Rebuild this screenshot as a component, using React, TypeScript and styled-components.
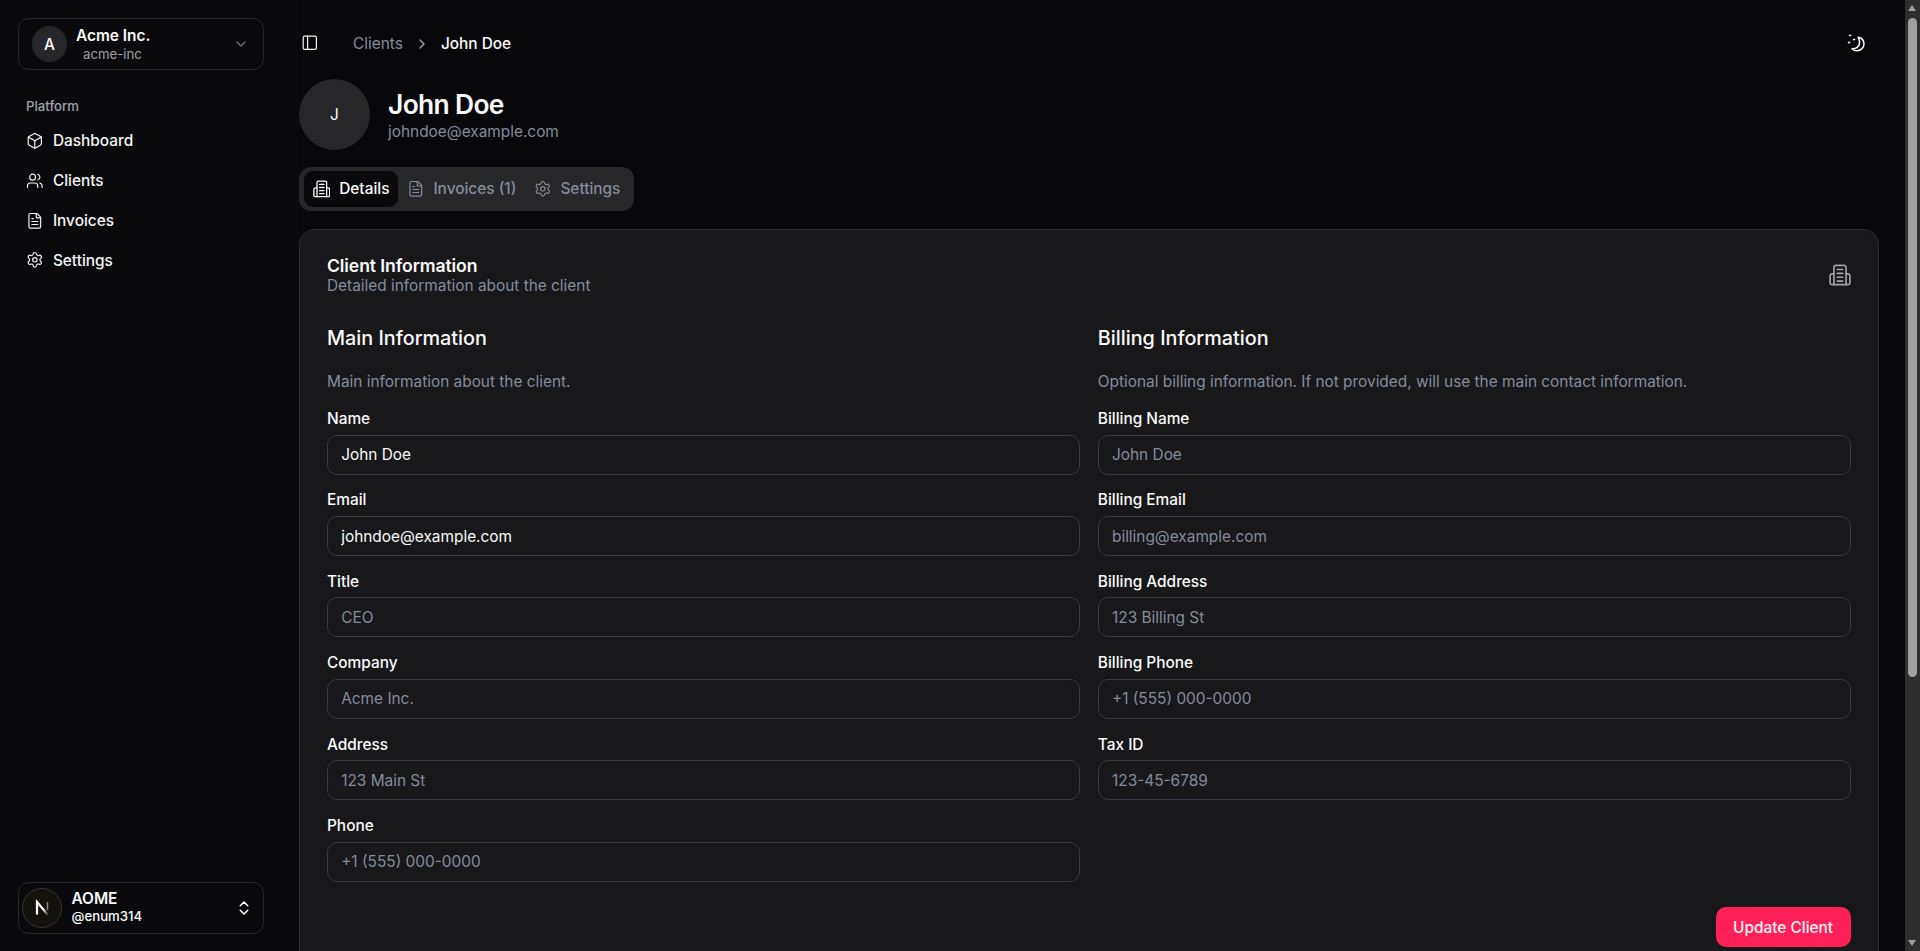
import React from "react";
import styled, { createGlobalStyle } from "styled-components";
import { Box, Users, FileText, Settings, PanelLeft, ChevronDown, ChevronRight, ChevronsUpDown } from "lucide-react";

const GlobalStyle = createGlobalStyle`
  html { color-scheme: dark; background: #09090b; }
  body { margin: 0; background: #09090b; color: #fafafa; font-family: Inter, "Liberation Sans", sans-serif; font-size: 15.4px; }
  * { box-sizing: border-box; }
`;

const Shell = styled.div`
  display: flex;
  min-height: 1324px;
  background: #08080a;
`;
const Sidebar = styled.aside`
  position: sticky;
  top: 0;
  flex: 0 0 299px;
  height: 951px;
  display: flex;
  flex-direction: column;
  padding: 18px 35px 17.5px 18px;
  background: #0a0a0c;
`;
const BorderedBox = styled.div`
  display: flex;
  align-items: center;
  border: 1px solid #27272a;
  border-radius: 11px;
  color: #fafafa;
`;
const TeamBox = styled(BorderedBox)`
  height: 52px;
  padding: 0 14px 0 13px;
  gap: 9px;
`;
const TeamAvatar = styled.div`
  width: 35px;
  height: 36px;
  border-radius: 50%;
  background: #27272a;
  display: flex;
  align-items: center;
  justify-content: center;
  font-size: 15.4px;
  font-weight: 500;
  flex: none;
`;
const TeamText = styled.div`
  display: flex;
  flex-direction: column;
  flex: 1;
  align-items: flex-start;
`;
const TeamName = styled.div`
  font-size: 15.4px;
  line-height: 19px;
  font-weight: 600;
`;
const TeamSlug = styled.div`
  font-size: 13.2px;
  line-height: 18px;
  margin-left: 7px;
  color: #a1a1aa;
`;
const GroupLabel = styled.div`
  margin: 26px 0 5px 8px;
  font-size: 13.2px;
  line-height: 20px;
  font-weight: 500;
  color: #a1a1aa;
`;
const NavList = styled.nav`
  display: flex;
  flex-direction: column;
`;
const NavItem = styled.a`
  display: flex;
  align-items: center;
  gap: 9.5px;
  height: 39.8px;
  padding-left: 7.8px;
  font-size: 15.4px;
  font-weight: 500;
  color: #f4f4f5;
`;
const UserBox = styled(BorderedBox)`
  height: 52px;
  margin-top: auto;
  padding: 0 10px 0 3px;
  gap: 9.5px;
`;
const UserText = styled.div`
  flex: 1;
  display: flex;
  flex-direction: column;
`;
const UserName = styled.div`
  font-size: 15.4px;
  line-height: 17px;
  font-weight: 600;
`;
const UserHandle = styled.div`
  font-size: 13.2px;
  line-height: 18px;
  font-weight: 500;
`;
const Main = styled.main`
  flex: 1;
  min-width: 0;
  padding: 0 41.4px 0 0;
`;
const TopBar = styled.header`
  height: 78px;
  padding: 8px 14px 0 2px;
  display: flex;
  align-items: center;
`;
const Crumbs = styled.div`
  display: flex;
  align-items: center;
  margin-left: 34.5px;
  flex: 1;
  font-size: 15.4px;
  padding-top: 1px;
`;
const CrumbLink = styled.span`
  color: #858c9b;
`;
const CrumbSep = styled.span`
  display: flex;
  width: 38px;
  justify-content: center;
  color: #a1a1aa;
`;
const CrumbCurrent = styled.span`
  font-weight: 500;
  color: #fafafa;
`;
const Profile = styled.section`
  display: flex;
  align-items: center;
  gap: 18px;
  height: 72px;
`;
const ProfileAvatar = styled.div`
  width: 71px;
  height: 71px;
  border-radius: 50%;
  background: #27272a;
  display: flex;
  align-items: center;
  justify-content: center;
  font-size: 15.4px;
`;
const ProfileName = styled.h1`
  margin: 0;
  padding-top: 1px;
  font-size: 26.4px;
  line-height: 35px;
  font-weight: 600;
  letter-spacing: -0.66px;
`;
const ProfileEmail = styled.div`
  font-size: 15.4px;
  line-height: 20px;
  color: #858c9b;
`;
const TabBar = styled.div`
  display: flex;
  margin-top: 17px;
  padding: 4.4px 5px;
  height: 44px;
  width: 335px;
  border-radius: 12px;
  background: #27272a;
`;
const Tab = styled.div<{ $active?: boolean }>`
  display: flex;
  align-items: center;
  flex: none;
  gap: 8.8px;
  height: 35.2px;
  padding: 0 8.8px;
  border-radius: 9px;
  font-size: 15.4px;
  font-weight: 500;
  white-space: nowrap;
  background: ${(p) => (p.$active ? "#09090b" : "transparent")};
  color: ${(p) => (p.$active ? "#fafafa" : "#858c9b")};
`;
const Card = styled.section`
  margin-top: 18px;
  border: 1px solid #2e2e33;
  border-radius: 15.4px;
  background: #18181b;
  padding: 25px 27px 28px;
`;
const CardHead = styled.div`
  display: flex;
  justify-content: space-between;
  align-items: center;
  height: 40px;
  margin-bottom: 29px;
`;
const CardTitle = styled.div`
  font-size: 17.6px;
  line-height: 20px;
  font-weight: 600;
  letter-spacing: -0.1px;
`;
const CardSubtitle = styled.div`
  font-size: 15.4px;
  line-height: 19px;
  color: #858c9b;
`;
const CardIcon = styled.span`
  display: flex;
  color: #a1a1aa;
`;
const Columns = styled.div`
  display: grid;
  grid-template-columns: 1fr 1fr;
  column-gap: 18px;
`;
const Column = styled.div`
  display: flex;
  flex-direction: column;
`;
const SectionTitle = styled.h2`
  margin: 0;
  font-size: 19.8px;
  line-height: 28px;
  font-weight: 500;
`;
const SectionText = styled.p`
  margin: 18px 0 14px;
  font-size: 15.4px;
  line-height: 24px;
  color: #858c9b;
`;
const Field = styled.label`
  display: flex;
  flex-direction: column;
  margin-bottom: 14.7px;
`;
const FieldLabel = styled.span`
  font-size: 15.4px;
  line-height: 22px;
  font-weight: 500;
  margin-bottom: 4.7px;
`;
const Input = styled.input`
  height: 40px;
  width: 100%;
  padding: 0 13.2px;
  border: 1px solid #3a3a40;
  border-radius: 10px;
  background: #18181b;
  color: #fafafa;
  font: 400 15.4px Inter, "Liberation Sans", sans-serif;
  outline: none;
  &::placeholder { color: #858c9b; opacity: 1; }
`;
const Actions = styled.div`
  display: flex;
  justify-content: flex-end;
  margin-top: 11px;
`;
const PrimaryButton = styled.button`
  height: 40px;
  width: 135px;
  border: none;
  border-radius: 10px;
  background: #ff2058;
  color: #fff5f7;
  font: 500 15.4px Inter, "Liberation Sans", sans-serif;
`;
const ScrollTrack = styled.div`
  position: fixed;
  top: 0;
  right: 0;
  bottom: 0;
  width: 15px;
  background: #2e2e2e;
`;
const ScrollArrow = styled.div<{ $down?: boolean }>`
  position: absolute;
  left: 3px;
  ${(p) => (p.$down ? "bottom: 5px;" : "top: 5px;")}
  width: 0;
  height: 0;
  border-left: 4.5px solid transparent;
  border-right: 4.5px solid transparent;
  ${(p) => (p.$down ? "border-top: 6px solid #a0a0a0;" : "border-bottom: 6px solid #a0a0a0;")}
`;
const ScrollThumb = styled.div`
  position: absolute;
  top: 18px;
  left: 3px;
  width: 9px;
  height: 659px;
  border-radius: 5px;
  background: #a0a0a0;
`;

const BuildingIcon = ({ size = 22 }: { size?: number }) => (
  <svg width={size} height={size} viewBox="0 0 20 20" fill="none" stroke="currentColor" strokeWidth="1.5" strokeLinecap="round" strokeLinejoin="round">
    <path d="M4.5 18.8V3a1.8 1.8 0 0 1 1.8-1.8h7.4A1.8 1.8 0 0 1 15.5 3v15.8" />
    <path d="M4.5 9H3A2 2 0 0 0 1 11V17.3a1.5 1.5 0 0 0 1.5 1.5H17.5a1.5 1.5 0 0 0 1.5-1.5V11a2 2 0 0 0-2-2H15.5" />
    <path d="M7.5 5h5M7.5 8.5h5M7.5 12h5M7.5 15.5h5" />
  </svg>
);

const MoonStarsIcon = () => (
  <svg width="18" height="18" viewBox="0 0 18 18" fill="none" stroke="currentColor" strokeLinecap="round" strokeLinejoin="round">
    <path strokeWidth="1.5" d="M11.2 3.2a7 7 0 0 1 5.8 6.6 7 7 0 0 1-7 7 7 7 0 0 1-5-2.1c3.8.3 7.6-1.8 7.6-6 0-2.2-.7-4-1.4-5.5z" />
    <circle cx="3" cy="1.5" r="0.7" fill="currentColor" strokeWidth="1" />
    <circle cx="7" cy="5.5" r="0.7" fill="currentColor" strokeWidth="1" />
    <circle cx="2" cy="8.5" r="0.7" fill="currentColor" strokeWidth="1" />
  </svg>
);

const NextLogo = () => (
  <svg width="40" height="40" viewBox="0 0 40 40" style={{ flex: "none" }}>
    <defs>
      <linearGradient id="nfade" x1="0" y1="0" x2="1" y2="1">
        <stop offset="0.55" stopColor="#fff" />
        <stop offset="1" stopColor="#fff" stopOpacity="0.1" />
      </linearGradient>
    </defs>
    <circle cx="20" cy="20" r="19.5" fill="#14110d" stroke="#3b342a" />
    <path d="M15 26.5V14l11 13" fill="none" stroke="url(#nfade)" strokeWidth="2.2" />
    <path d="M25.5 14v8" stroke="#fff" strokeOpacity="0.5" strokeWidth="1.5" />
  </svg>
);

const nav = [
  { label: "Dashboard", Icon: Box },
  { label: "Clients", Icon: Users },
  { label: "Invoices", Icon: FileText },
  { label: "Settings", Icon: Settings },
];
const mainFields = [
  { label: "Name", value: "John Doe" },
  { label: "Email", value: "johndoe@example.com" },
  { label: "Title", placeholder: "CEO" },
  { label: "Company", placeholder: "Acme Inc." },
  { label: "Address", placeholder: "123 Main St" },
  { label: "Phone", placeholder: "+1 (555) 000-0000" },
];
const billingFields = [
  { label: "Billing Name", placeholder: "John Doe" },
  { label: "Billing Email", placeholder: "billing@example.com" },
  { label: "Billing Address", placeholder: "123 Billing St" },
  { label: "Billing Phone", placeholder: "+1 (555) 000-0000" },
  { label: "Tax ID", placeholder: "123-45-6789" },
];

type F = { label: string; value?: string; placeholder?: string };
const FieldRow = ({ label, value, placeholder }: F) => (
  <Field>
    <FieldLabel>{label}</FieldLabel>
    <Input defaultValue={value} placeholder={placeholder} />
  </Field>
);

export default function App() {
  return (
    <>
      <GlobalStyle />
      <Shell>
        <Sidebar>
          <TeamBox>
            <TeamAvatar>A</TeamAvatar>
            <TeamText>
              <TeamName>Acme Inc.</TeamName>
              <TeamSlug>acme-inc</TeamSlug>
            </TeamText>
            <ChevronDown size={16} color="#71717a" />
          </TeamBox>
          <GroupLabel>Platform</GroupLabel>
          <NavList>
            {nav.map(({ label, Icon }) => (
              <NavItem key={label}>
                <Icon size={17.6} strokeWidth={1.6} />
                {label}
              </NavItem>
            ))}
          </NavList>
          <UserBox>
            <NextLogo />
            <UserText>
              <UserName>AOME</UserName>
              <UserHandle>@enum314</UserHandle>
            </UserText>
            <ChevronsUpDown size={18} />
          </UserBox>
        </Sidebar>
        <Main>
          <TopBar>
            <PanelLeft size={17.6} strokeWidth={1.6} />
            <Crumbs>
              <CrumbLink>Clients</CrumbLink>
              <CrumbSep>
                <ChevronRight size={16} />
              </CrumbSep>
              <CrumbCurrent>John Doe</CrumbCurrent>
            </Crumbs>
            <MoonStarsIcon />
          </TopBar>
          <Profile>
            <ProfileAvatar>J</ProfileAvatar>
            <div>
              <ProfileName>John Doe</ProfileName>
              <ProfileEmail>johndoe@example.com</ProfileEmail>
            </div>
          </Profile>
          <TabBar>
            <Tab $active>
              <BuildingIcon size={17.6} />
              Details
            </Tab>
            <Tab>
              <FileText size={17.6} strokeWidth={1.6} />
              Invoices (1)
            </Tab>
            <Tab>
              <Settings size={17.6} strokeWidth={1.6} />
              Settings
            </Tab>
          </TabBar>
          <Card>
            <CardHead>
              <div>
                <CardTitle>Client Information</CardTitle>
                <CardSubtitle>Detailed information about the client</CardSubtitle>
              </div>
              <CardIcon>
                <BuildingIcon />
              </CardIcon>
            </CardHead>
            <Columns>
              <Column>
                <SectionTitle>Main Information</SectionTitle>
                <SectionText>Main information about the client.</SectionText>
                {mainFields.map((f) => (
                  <FieldRow key={f.label} {...f} />
                ))}
              </Column>
              <Column>
                <SectionTitle>Billing Information</SectionTitle>
                <SectionText>Optional billing information. If not provided, will use the main contact information.</SectionText>
                {billingFields.map((f) => (
                  <FieldRow key={f.label} {...f} />
                ))}
              </Column>
            </Columns>
            <Actions>
              <PrimaryButton>Update Client</PrimaryButton>
            </Actions>
          </Card>
        </Main>
      </Shell>
      <ScrollTrack>
        <ScrollArrow />
        <ScrollThumb />
        <ScrollArrow $down />
      </ScrollTrack>
    </>
  );
}
